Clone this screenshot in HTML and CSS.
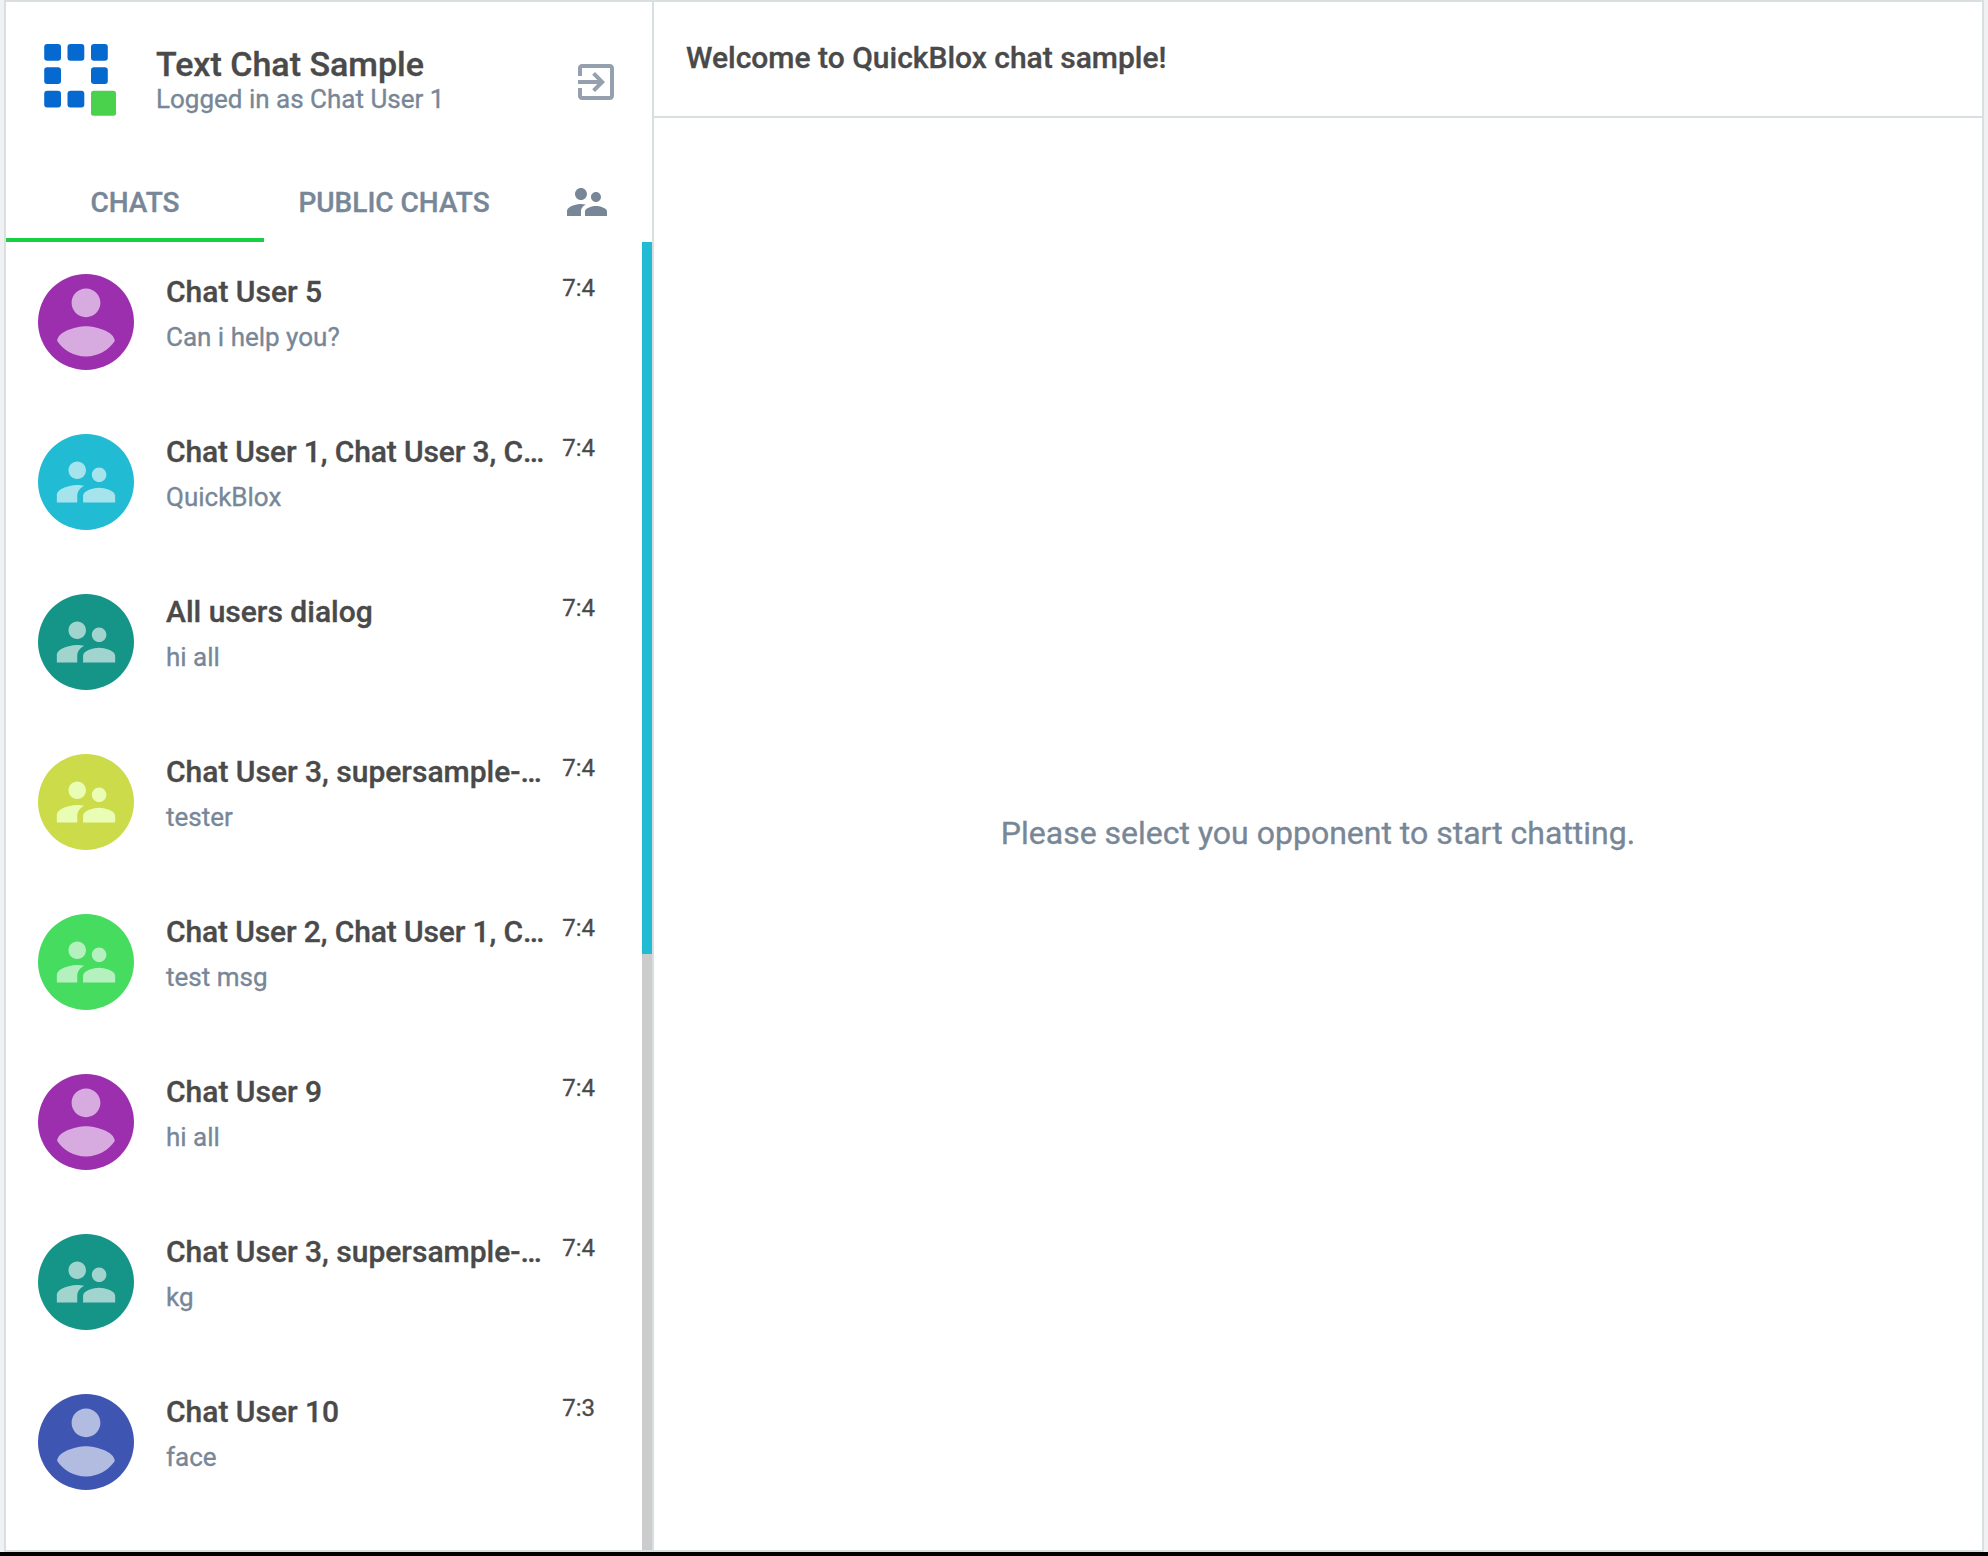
FILE: index.html
```html
<!DOCTYPE html>
<html lang="en">
<head>
<meta charset="utf-8">
<title>Text Chat Sample</title>
<link rel="stylesheet" href="styles.css">
</head>
<body>
<svg class="defs" aria-hidden="true">
  <symbol id="group" viewBox="0 0 24 24"><path d="M16.5 12c1.38 0 2.49-1.12 2.49-2.5S17.88 7 16.5 7C15.12 7 14 8.12 14 9.5s1.12 2.5 2.5 2.5zM9 11c1.66 0 2.99-1.34 2.99-3S10.66 5 9 5C7.34 5 6 6.34 6 8s1.34 3 3 3zm7.5 3c-1.83 0-5.5.92-5.5 2.75V19h11v-2.25c0-1.83-3.67-2.75-5.5-2.75zM9 13c-2.33 0-7 1.17-7 3.5V19h7v-2.25c0-.85.33-2.34 2.37-3.47C10.5 13.1 9.66 13 9 13z"/></symbol>
  <symbol id="person" viewBox="2 2 20 20"><path d="M12 5c1.66 0 3 1.34 3 3s-1.34 3-3 3-3-1.34-3-3 1.34-3 3-3zm0 14.2c-2.5 0-4.71-1.28-6-3.22.03-1.99 4-3.08 6-3.08 1.99 0 5.97 1.09 6 3.08-1.29 1.94-3.5 3.22-6 3.22z"/></symbol>
</svg>
<div class="app">
  <aside class="sidebar">
    <header class="profile">
      <svg class="logo" viewBox="0 0 72 72">
        <g fill="#0669d0">
          <rect x="0.2" y="0" width="16.8" height="16.8" rx="3"/>
          <rect x="23.5" y="0" width="16.8" height="16.8" rx="3"/>
          <rect x="47" y="0" width="16.8" height="16.8" rx="3"/>
          <rect x="0.2" y="23.3" width="16.8" height="16.8" rx="3"/>
          <rect x="47" y="23.3" width="16.8" height="16.8" rx="3"/>
          <rect x="0.2" y="46.8" width="16.8" height="16.8" rx="3"/>
          <rect x="23.5" y="46.8" width="16.8" height="16.8" rx="3"/>
        </g>
        <rect x="47" y="46.8" width="25" height="25" rx="2.5" fill="#4bd24c"/>
      </svg>
      <div class="who">
        <h1 class="app-title">Text Chat Sample</h1>
        <p class="logged">Logged in as Chat User 1</p>
      </div>
      <svg class="logout" viewBox="0 0 24 24"><path d="M10.09 15.59L11.5 17l5-5-5-5-1.41 1.41L12.67 11H3v2h9.67l-2.58 2.59zM19 3H5c-1.11 0-2 .9-2 2v4h2V5h14v14H5v-4H3v4c0 1.1.89 2 2 2h14c1.1 0 2-.9 2-2V5c0-1.1-.9-2-2-2z"/></svg>
    </header>
    <nav class="tabs">
      <a class="tab active">CHATS</a>
      <a class="tab">PUBLIC CHATS</a>
      <a class="tab"><svg class="tab-icon"><use href="#group"/></svg></a>
    </nav>
    <div class="list-wrap">
      <ul class="list">
        <li class="item"><span class="avatar purple"><svg class="one"><use href="#person"/></svg></span><div class="text"><p class="name">Chat User 5</p><p class="last">Can i help you?</p></div><time class="time">7:4</time></li>
        <li class="item"><span class="avatar cyan"><svg class="many"><use href="#group"/></svg></span><div class="text"><p class="name tight">Chat User 1, Chat User 3, C…</p><p class="last">QuickBlox</p></div><time class="time">7:4</time></li>
        <li class="item"><span class="avatar teal"><svg class="many"><use href="#group"/></svg></span><div class="text"><p class="name">All users dialog</p><p class="last">hi all</p></div><time class="time">7:4</time></li>
        <li class="item"><span class="avatar lime"><svg class="many"><use href="#group"/></svg></span><div class="text"><p class="name">Chat User 3, supersample-…</p><p class="last">tester</p></div><time class="time">7:4</time></li>
        <li class="item"><span class="avatar green"><svg class="many"><use href="#group"/></svg></span><div class="text"><p class="name tight">Chat User 2, Chat User 1, C…</p><p class="last">test msg</p></div><time class="time">7:4</time></li>
        <li class="item"><span class="avatar purple"><svg class="one"><use href="#person"/></svg></span><div class="text"><p class="name">Chat User 9</p><p class="last">hi all</p></div><time class="time">7:4</time></li>
        <li class="item"><span class="avatar teal"><svg class="many"><use href="#group"/></svg></span><div class="text"><p class="name">Chat User 3, supersample-…</p><p class="last">kg</p></div><time class="time">7:4</time></li>
        <li class="item"><span class="avatar indigo"><svg class="one"><use href="#person"/></svg></span><div class="text"><p class="name">Chat User 10</p><p class="last">face</p></div><time class="time">7:3</time></li>
      </ul>
      <div class="scrollbar"><div class="thumb"></div></div>
    </div>
  </aside>
  <main class="main">
    <header class="main-head">Welcome to QuickBlox chat sample!</header>
    <section class="empty">Please select you opponent to start chatting.</section>
  </main>
</div>
</body>
</html>
```
FILE: styles.css
```css
* { box-sizing: border-box; }
body {
  margin: 0;
  height: 1556px;
  padding: 0 4px;
  overflow: hidden;
  background: #f0f1f3;
  border-bottom: 4px solid #000;
  font-family: Roboto, "Liberation Sans", sans-serif;
  color: #4a4a4a;
  -webkit-text-stroke: 0.35px currentColor;
}
h1, p, ul { margin: 0; padding: 0; list-style: none; }
svg { display: block; fill: currentColor; }
.defs { display: none; }

.app {
  display: flex;
  height: 1552px;
  background: #fff;
  border: 2px solid #d9dee1;
}
.sidebar {
  display: flex;
  flex-direction: column;
  width: 648px;
  border-right: 2px solid #d9dee1;
}

.profile {
  display: flex;
  align-items: flex-start;
  height: 156px;
  padding: 42px 32px 0 38px;
}
.logo { width: 72px; height: 72px; }
.who { flex: 1; margin-left: 40px; }
.app-title { font-size: 34px; line-height: 40px; font-weight: 500; }
.logged { margin-top: 1px; font-size: 26px; line-height: 28px; color: #788797; }
.logout { width: 48px; height: 48px; margin-top: 14px; color: #95a0ae; }

.tabs {
  display: grid;
  grid-template-columns: 258px 260px 126px;
  height: 84px;
}
.tab {
  display: flex;
  align-items: center;
  justify-content: center;
  padding-top: 9px;
  border-bottom: 4px solid transparent;
  font-size: 28px;
  font-weight: 500;
  color: #788797;
}
.tab.active { border-color: #17ce44; }
.tab-icon { width: 48px; height: 48px; margin-bottom: 1px; }

.list-wrap { flex: 1; display: flex; min-height: 0; }
.list { flex: 1; overflow: hidden; }
.item { display: flex; height: 160px; padding: 32px 47px 0 32px; }
.avatar {
  display: flex;
  flex: none;
  align-items: center;
  justify-content: center;
  width: 96px;
  height: 96px;
  border-radius: 50%;
  color: rgba(255, 255, 255, 0.6);
}
.one { width: 96px; height: 96px; }
.many { width: 70px; height: 70px; }
.purple { background: #9c2fae; }
.cyan { background: #21bbd3; }
.teal { background: #159588; }
.lime { background: #ccdb4a; color: #e9fdb5; }
.green { background: #46dc5f; }
.indigo { background: #3f55b2; }

.text { width: 384px; margin-left: 32px; }
.name {
  font-size: 30px;
  font-weight: 500;
  line-height: 35px;
  white-space: nowrap;
}
.name.tight { letter-spacing: -0.12px; }
.last { margin-top: 13px; font-size: 26px; line-height: 30px; color: #788797; }
.time { margin-left: auto; font-size: 24px; line-height: 28px; }

.scrollbar { width: 10px; background: #cbcccb; }
.thumb { height: 712px; background: #21bbd3; }

.main { flex: 1; display: flex; flex-direction: column; }
.main-head {
  height: 116px;
  padding: 38px 32px 0;
  border-bottom: 2px solid #d9dee1;
  font-size: 30px;
  font-weight: 500;
  line-height: 35px;
}
.empty {
  flex: 1;
  display: flex;
  align-items: center;
  justify-content: center;
  padding-bottom: 2px;
  font-size: 32px;
  color: #788797;
}
```
